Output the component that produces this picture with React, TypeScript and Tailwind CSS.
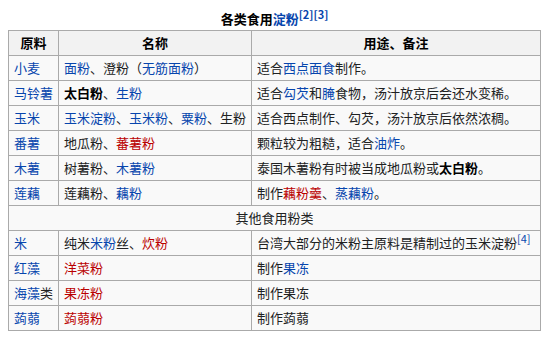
import React from 'react';

type Seg = { t: string; c?: 'link' | 'red' | 'bold' };

const L = (t: string): Seg => ({ t, c: 'link' });
const R = (t: string): Seg => ({ t, c: 'red' });
const B = (t: string): Seg => ({ t, c: 'bold' });
const T = (t: string): Seg => ({ t });

const Text: React.FC<{ segs: Seg[] }> = ({ segs }) => (
  <>
    {segs.map((s, i) => (
      <span
        key={i}
        className={
          s.c === 'link'
            ? 'text-[#0645ad]'
            : s.c === 'red'
            ? 'text-[#ba0000]'
            : s.c === 'bold'
            ? 'font-bold text-black'
            : ''
        }
      >
        {s.t}
      </span>
    ))}
  </>
);

const Ref: React.FC<{ n: string; bold?: boolean }> = ({ n, bold }) => (
  <sup
    className={
      'relative -top-[5px] align-baseline text-[11px] leading-none text-[#0645ad] ' +
      (bold ? 'font-bold' : 'font-normal')
    }
  >
    [{n}]
  </sup>
);

const mainRows: Seg[][][] = [
  [[L('小麦')], [L('面粉'), T('、澄粉（'), L('无筋面粉'), T('）')], [T('适合'), L('西点面食'), T('制作。')]],
  [[L('马铃薯')], [B('太白粉'), T('、'), L('生粉')], [T('适合'), L('勾芡'), T('和'), L('腌'), T('食物，汤汁放京后会还水变稀。')]],
  [[L('玉米')], [L('玉米淀粉'), T('、'), L('玉米粉'), T('、'), L('粟粉'), T('、生粉')], [T('适合西点制作、勾芡，汤汁放京后依然浓稠。')]],
  [[L('番薯')], [T('地瓜粉、'), R('蕃薯粉')], [T('颗粒较为粗糙，适合'), L('油炸'), T('。')]],
  [[L('木薯')], [T('树薯粉、'), L('木薯粉')], [T('泰国木薯粉有时被当成地瓜粉或'), B('太白粉'), T('。')]],
  [[L('莲藕')], [T('莲藕粉、'), L('藕粉')], [T('制作'), R('藕粉羹'), T('、'), L('蒸藕粉'), T('。')]],
];

const otherRows: Seg[][][] = [
  [[L('红藻')], [R('洋菜粉')], [T('制作'), L('果冻')]],
  [[L('海藻'), T('类')], [R('果冻粉')], [T('制作果冻')]],
  [[L('蒟蒻')], [R('蒟蒻粉')], [T('制作蒟蒻')]],
];

const td = 'border border-[#aaa] px-[5px] py-[3px] leading-[18px] whitespace-nowrap';

export default function App() {
  return (
    <div
      className="bg-white p-2 text-[13px] text-[#202122]"
      style={{ fontFamily: '"Noto Sans CJK SC", "Noto Sans", sans-serif' }}
    >
      <table className="w-full table-fixed border-collapse bg-[#f9f9f9] border border-[#aaa]">
        <caption className="bg-white font-bold leading-[22px] text-black">
          各类食用<span className="text-[#0645ad]">淀粉</span>
          <Ref n="2" bold />
          <Ref n="3" bold />
        </caption>
        <colgroup>
          <col className="w-[50px]" />
          <col className="w-[193px]" />
          <col />
        </colgroup>
        <thead>
          <tr className="bg-[#f2f2f2] text-black">
            <th className={td + ' text-center font-bold'}>原料</th>
            <th className={td + ' text-center font-bold'}>名称</th>
            <th className={td + ' text-center font-bold'}>用途、备注</th>
          </tr>
        </thead>
        <tbody>
          {mainRows.map((r, i) => (
            <tr key={i}>
              {r.map((c, j) => (
                <td key={j} className={td}>
                  <Text segs={c} />
                </td>
              ))}
            </tr>
          ))}
          <tr>
            <td colSpan={3} className={td + ' text-center'}>
              其他食用粉类
            </td>
          </tr>
          <tr>
            <td className={td}>
              <Text segs={[L('米')]} />
            </td>
            <td className={td}>
              <Text segs={[T('纯米'), L('米粉'), T('丝、'), R('炊粉')]} />
            </td>
            <td className={td}>
              台湾大部分的米粉主原料是精制过的玉米淀粉
              <Ref n="4" />
            </td>
          </tr>
          {otherRows.map((r, i) => (
            <tr key={i}>
              {r.map((c, j) => (
                <td key={j} className={td}>
                  <Text segs={c} />
                </td>
              ))}
            </tr>
          ))}
        </tbody>
      </table>
    </div>
  );
}
